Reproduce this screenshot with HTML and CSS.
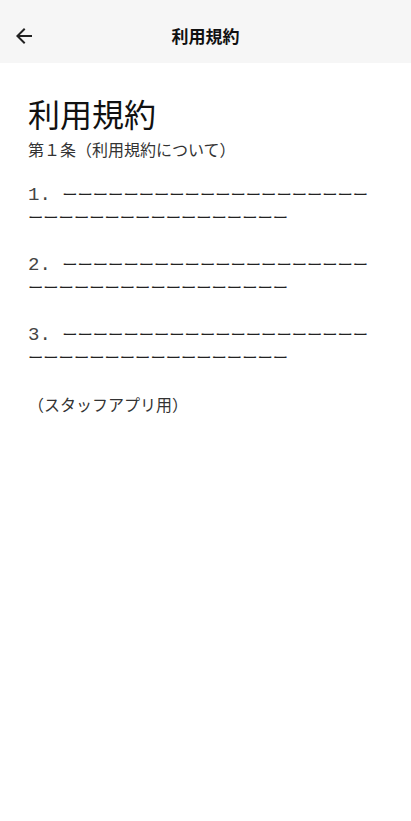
FILE: index.html
```html
<!DOCTYPE html>
<html lang="ja">
<head>
  <meta charset="UTF-8">
  <title>利用規約</title>
  <link rel="stylesheet" href="styles.css">
</head>
<body>

  <header class="app-bar">
    <button class="back-btn" aria-label="戻る">
      <svg width="24" height="24" viewBox="0 0 24 24">
        <path d="M20 11H7.83l5.59-5.59L12 4l-8 8 8 8 1.41-1.41L7.83 13H20v-2z" fill="#222"/>
      </svg>
    </button>
    <h1 class="app-title">利用規約</h1>
    <span class="spacer"></span>
  </header>

  <main class="terms">
    <h2 class="terms-title">利用規約</h2>
    <p class="article">第１条（利用規約について）</p>

    <ol class="clauses">
      <li class="clause">1. <span class="rule">ーーーーーーーーーーーーーーーーーーーーーーーーーーーーーーーーーーーーー</span></li>
      <li class="clause">2. <span class="rule">ーーーーーーーーーーーーーーーーーーーーーーーーーーーーーーーーーーーーー</span></li>
      <li class="clause">3. <span class="rule">ーーーーーーーーーーーーーーーーーーーーーーーーーーーーーーーーーーーーー</span></li>
    </ol>

    <p class="note">（スタッフアプリ用）</p>
  </main>

</body>
</html>
```

FILE: styles.css
```css
:root {
  --bar-bg: #f6f6f6;
  --text: #111;
  --text-sub: #333;
}

body {
  margin: 0;
  padding: 0;
  font-family: "Noto Sans CJK JP", "Noto Sans", sans-serif;
  background-color: #fff;
  color: var(--text);
}

.app-bar {
  display: flex;
  align-items: center;
  height: 63px;
  padding: 0 12px;
  background-color: var(--bar-bg);
}

.back-btn {
  display: flex;
  align-items: center;
  justify-content: center;
  width: 24px;
  height: 24px;
  padding: 0;
  margin-top: 8px;
  border: none;
  background: none;
  cursor: pointer;
}

.app-title {
  flex: 1;
  margin: 0;
  margin-top: 8px;
  text-align: center;
  font-size: 17px;
  font-weight: bold;
  color: var(--text);
}

.spacer {
  width: 24px;
}

.terms {
  padding: 28px 28px 0;
}

.terms-title {
  margin: 0;
  font-size: 32px;
  font-weight: normal;
  line-height: 44px;
}

.article {
  margin: 2px 0 0;
  font-size: 16px;
  line-height: 24px;
  color: var(--text-sub);
}

.clauses {
  list-style: none;
  margin: 23px 0 0;
  padding: 0;
  max-width: 345px;
}

.clause {
  font-family: "Liberation Mono", "Noto Sans CJK JP", monospace;
  font-size: 19px;
  line-height: 23px;
  color: #444;
  margin-bottom: 24px;
}

.clause:last-child {
  margin-bottom: 22px;
}

.clause .rule {
  font-family: "Noto Sans CJK JP", sans-serif;
  font-size: 15.3px;
  line-height: 1;
  color: #222;
  word-break: break-all;
}

.note {
  margin: 0;
  font-size: 16px;
  line-height: 24px;
  color: var(--text-sub);
}
```
